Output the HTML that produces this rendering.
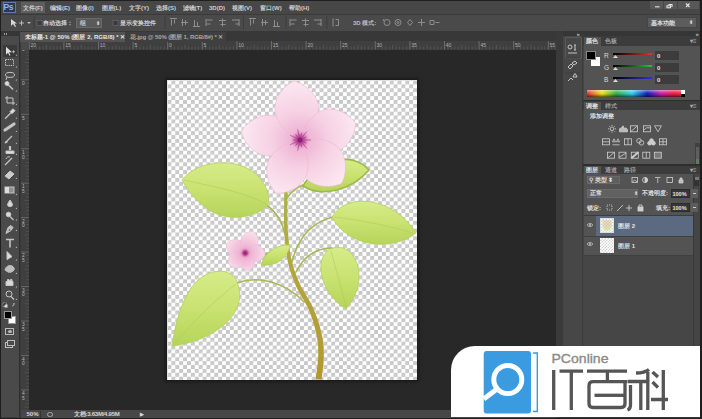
<!DOCTYPE html>
<html><head><meta charset="utf-8">
<style>
*{margin:0;padding:0;box-sizing:border-box}
html,body{width:702px;height:419px;overflow:hidden;background:#3a3a3a;font-family:"Liberation Sans",sans-serif;color:#cfcfcf}
.a{position:absolute}
.t{position:absolute;white-space:nowrap;font-size:6px;line-height:8px;color:#d2d2d2;font-weight:bold}
#menubar{left:1px;top:1px;width:700px;height:12.5px;background:#474747}
#optbar{left:1px;top:14.5px;width:700px;height:16.5px;background:#4a4a4a}
#tabstrip{left:20px;top:31px;width:536px;height:11px;background:#383838}
#canvasbg{left:29px;top:49.5px;width:527px;height:360.5px;background:#282828}
#hruler{left:21px;top:41px;width:535px;height:8.5px;background:#3f3f3f}
#vruler{left:20.5px;top:41px;width:8.5px;height:369px;background:#3f3f3f}
#toolbar{left:1px;top:31px;width:18.5px;height:386px;background:#4a4a4a;border-right:1px solid #2f2f2f}
#status{left:21px;top:410px;width:535px;height:7.5px;background:#474747}
#gapcol{left:556px;top:31px;width:7px;height:386px;background:#3a3a3a}
#iconcol{left:563px;top:31px;width:19px;height:386px;background:#474747}
#panel{left:583px;top:31px;width:117px;height:386px;background:#464646}
#canvas{left:166.5px;top:79.5px;width:250px;height:300px;background-color:#fff;
 background-image:linear-gradient(45deg,#c6c6c6 25%,transparent 25%,transparent 75%,#c6c6c6 75%),linear-gradient(45deg,#c6c6c6 25%,transparent 25%,transparent 75%,#c6c6c6 75%);
 background-size:7.8px 7.8px;background-position:0.5px 0.5px,4.4px 4.4px;box-shadow:0 0 0 1px #1b1b1b,0 0 3px 2px rgba(0,0,0,.35)}
.mb{font-weight:bold;color:#cdcdcd}
.box{position:absolute;background:#383838;border:0.5px solid #2c2c2c}
#wrap{position:absolute;left:0;top:0;width:702px;height:419px;overflow:hidden}
</style></head><body><div id="wrap">
<div class="a" style="left:0;top:0;width:702px;height:1.2px;background:#1f1f1f"></div><div class="a" style="left:0;top:0;width:1px;height:419px;background:#1f1f1f"></div>
<div class="a" id="menubar"></div>
<div class="a" id="optbar"></div>
<div class="a" id="tabstrip"></div>
<div class="a" id="canvasbg"></div>
<div class="a" id="hruler"></div>
<div class="a" id="vruler"></div>
<svg class="a" style="left:0;top:0" width="702" height="60"><line x1="29.30" y1="41.0" x2="29.30" y2="49.5" stroke="#808080" stroke-width="0.7"/><line x1="32.76" y1="46.5" x2="32.76" y2="49.5" stroke="#5e5e5e" stroke-width="0.7"/><line x1="36.22" y1="46.5" x2="36.22" y2="49.5" stroke="#5e5e5e" stroke-width="0.7"/><line x1="39.68" y1="46.5" x2="39.68" y2="49.5" stroke="#5e5e5e" stroke-width="0.7"/><line x1="43.14" y1="46.5" x2="43.14" y2="49.5" stroke="#5e5e5e" stroke-width="0.7"/><line x1="46.60" y1="45.0" x2="46.60" y2="49.5" stroke="#5e5e5e" stroke-width="0.7"/><line x1="50.06" y1="46.5" x2="50.06" y2="49.5" stroke="#5e5e5e" stroke-width="0.7"/><line x1="53.52" y1="46.5" x2="53.52" y2="49.5" stroke="#5e5e5e" stroke-width="0.7"/><line x1="56.98" y1="46.5" x2="56.98" y2="49.5" stroke="#5e5e5e" stroke-width="0.7"/><line x1="60.44" y1="46.5" x2="60.44" y2="49.5" stroke="#5e5e5e" stroke-width="0.7"/><line x1="63.90" y1="41.0" x2="63.90" y2="49.5" stroke="#808080" stroke-width="0.7"/><line x1="67.36" y1="46.5" x2="67.36" y2="49.5" stroke="#5e5e5e" stroke-width="0.7"/><line x1="70.82" y1="46.5" x2="70.82" y2="49.5" stroke="#5e5e5e" stroke-width="0.7"/><line x1="74.28" y1="46.5" x2="74.28" y2="49.5" stroke="#5e5e5e" stroke-width="0.7"/><line x1="77.74" y1="46.5" x2="77.74" y2="49.5" stroke="#5e5e5e" stroke-width="0.7"/><line x1="81.20" y1="45.0" x2="81.20" y2="49.5" stroke="#5e5e5e" stroke-width="0.7"/><line x1="84.66" y1="46.5" x2="84.66" y2="49.5" stroke="#5e5e5e" stroke-width="0.7"/><line x1="88.12" y1="46.5" x2="88.12" y2="49.5" stroke="#5e5e5e" stroke-width="0.7"/><line x1="91.58" y1="46.5" x2="91.58" y2="49.5" stroke="#5e5e5e" stroke-width="0.7"/><line x1="95.04" y1="46.5" x2="95.04" y2="49.5" stroke="#5e5e5e" stroke-width="0.7"/><line x1="98.50" y1="41.0" x2="98.50" y2="49.5" stroke="#808080" stroke-width="0.7"/><line x1="101.96" y1="46.5" x2="101.96" y2="49.5" stroke="#5e5e5e" stroke-width="0.7"/><line x1="105.42" y1="46.5" x2="105.42" y2="49.5" stroke="#5e5e5e" stroke-width="0.7"/><line x1="108.88" y1="46.5" x2="108.88" y2="49.5" stroke="#5e5e5e" stroke-width="0.7"/><line x1="112.34" y1="46.5" x2="112.34" y2="49.5" stroke="#5e5e5e" stroke-width="0.7"/><line x1="115.80" y1="45.0" x2="115.80" y2="49.5" stroke="#5e5e5e" stroke-width="0.7"/><line x1="119.26" y1="46.5" x2="119.26" y2="49.5" stroke="#5e5e5e" stroke-width="0.7"/><line x1="122.72" y1="46.5" x2="122.72" y2="49.5" stroke="#5e5e5e" stroke-width="0.7"/><line x1="126.18" y1="46.5" x2="126.18" y2="49.5" stroke="#5e5e5e" stroke-width="0.7"/><line x1="129.64" y1="46.5" x2="129.64" y2="49.5" stroke="#5e5e5e" stroke-width="0.7"/><line x1="133.10" y1="41.0" x2="133.10" y2="49.5" stroke="#808080" stroke-width="0.7"/><line x1="136.56" y1="46.5" x2="136.56" y2="49.5" stroke="#5e5e5e" stroke-width="0.7"/><line x1="140.02" y1="46.5" x2="140.02" y2="49.5" stroke="#5e5e5e" stroke-width="0.7"/><line x1="143.48" y1="46.5" x2="143.48" y2="49.5" stroke="#5e5e5e" stroke-width="0.7"/><line x1="146.94" y1="46.5" x2="146.94" y2="49.5" stroke="#5e5e5e" stroke-width="0.7"/><line x1="150.40" y1="45.0" x2="150.40" y2="49.5" stroke="#5e5e5e" stroke-width="0.7"/><line x1="153.86" y1="46.5" x2="153.86" y2="49.5" stroke="#5e5e5e" stroke-width="0.7"/><line x1="157.32" y1="46.5" x2="157.32" y2="49.5" stroke="#5e5e5e" stroke-width="0.7"/><line x1="160.78" y1="46.5" x2="160.78" y2="49.5" stroke="#5e5e5e" stroke-width="0.7"/><line x1="164.24" y1="46.5" x2="164.24" y2="49.5" stroke="#5e5e5e" stroke-width="0.7"/><line x1="167.70" y1="41.0" x2="167.70" y2="49.5" stroke="#808080" stroke-width="0.7"/><line x1="171.16" y1="46.5" x2="171.16" y2="49.5" stroke="#5e5e5e" stroke-width="0.7"/><line x1="174.62" y1="46.5" x2="174.62" y2="49.5" stroke="#5e5e5e" stroke-width="0.7"/><line x1="178.08" y1="46.5" x2="178.08" y2="49.5" stroke="#5e5e5e" stroke-width="0.7"/><line x1="181.54" y1="46.5" x2="181.54" y2="49.5" stroke="#5e5e5e" stroke-width="0.7"/><line x1="185.00" y1="45.0" x2="185.00" y2="49.5" stroke="#5e5e5e" stroke-width="0.7"/><line x1="188.46" y1="46.5" x2="188.46" y2="49.5" stroke="#5e5e5e" stroke-width="0.7"/><line x1="191.92" y1="46.5" x2="191.92" y2="49.5" stroke="#5e5e5e" stroke-width="0.7"/><line x1="195.38" y1="46.5" x2="195.38" y2="49.5" stroke="#5e5e5e" stroke-width="0.7"/><line x1="198.84" y1="46.5" x2="198.84" y2="49.5" stroke="#5e5e5e" stroke-width="0.7"/><line x1="202.30" y1="41.0" x2="202.30" y2="49.5" stroke="#808080" stroke-width="0.7"/><line x1="205.76" y1="46.5" x2="205.76" y2="49.5" stroke="#5e5e5e" stroke-width="0.7"/><line x1="209.22" y1="46.5" x2="209.22" y2="49.5" stroke="#5e5e5e" stroke-width="0.7"/><line x1="212.68" y1="46.5" x2="212.68" y2="49.5" stroke="#5e5e5e" stroke-width="0.7"/><line x1="216.14" y1="46.5" x2="216.14" y2="49.5" stroke="#5e5e5e" stroke-width="0.7"/><line x1="219.60" y1="45.0" x2="219.60" y2="49.5" stroke="#5e5e5e" stroke-width="0.7"/><line x1="223.06" y1="46.5" x2="223.06" y2="49.5" stroke="#5e5e5e" stroke-width="0.7"/><line x1="226.52" y1="46.5" x2="226.52" y2="49.5" stroke="#5e5e5e" stroke-width="0.7"/><line x1="229.98" y1="46.5" x2="229.98" y2="49.5" stroke="#5e5e5e" stroke-width="0.7"/><line x1="233.44" y1="46.5" x2="233.44" y2="49.5" stroke="#5e5e5e" stroke-width="0.7"/><line x1="236.90" y1="41.0" x2="236.90" y2="49.5" stroke="#808080" stroke-width="0.7"/><line x1="240.36" y1="46.5" x2="240.36" y2="49.5" stroke="#5e5e5e" stroke-width="0.7"/><line x1="243.82" y1="46.5" x2="243.82" y2="49.5" stroke="#5e5e5e" stroke-width="0.7"/><line x1="247.28" y1="46.5" x2="247.28" y2="49.5" stroke="#5e5e5e" stroke-width="0.7"/><line x1="250.74" y1="46.5" x2="250.74" y2="49.5" stroke="#5e5e5e" stroke-width="0.7"/><line x1="254.20" y1="45.0" x2="254.20" y2="49.5" stroke="#5e5e5e" stroke-width="0.7"/><line x1="257.66" y1="46.5" x2="257.66" y2="49.5" stroke="#5e5e5e" stroke-width="0.7"/><line x1="261.12" y1="46.5" x2="261.12" y2="49.5" stroke="#5e5e5e" stroke-width="0.7"/><line x1="264.58" y1="46.5" x2="264.58" y2="49.5" stroke="#5e5e5e" stroke-width="0.7"/><line x1="268.04" y1="46.5" x2="268.04" y2="49.5" stroke="#5e5e5e" stroke-width="0.7"/><line x1="271.50" y1="41.0" x2="271.50" y2="49.5" stroke="#808080" stroke-width="0.7"/><line x1="274.96" y1="46.5" x2="274.96" y2="49.5" stroke="#5e5e5e" stroke-width="0.7"/><line x1="278.42" y1="46.5" x2="278.42" y2="49.5" stroke="#5e5e5e" stroke-width="0.7"/><line x1="281.88" y1="46.5" x2="281.88" y2="49.5" stroke="#5e5e5e" stroke-width="0.7"/><line x1="285.34" y1="46.5" x2="285.34" y2="49.5" stroke="#5e5e5e" stroke-width="0.7"/><line x1="288.80" y1="45.0" x2="288.80" y2="49.5" stroke="#5e5e5e" stroke-width="0.7"/><line x1="292.26" y1="46.5" x2="292.26" y2="49.5" stroke="#5e5e5e" stroke-width="0.7"/><line x1="295.72" y1="46.5" x2="295.72" y2="49.5" stroke="#5e5e5e" stroke-width="0.7"/><line x1="299.18" y1="46.5" x2="299.18" y2="49.5" stroke="#5e5e5e" stroke-width="0.7"/><line x1="302.64" y1="46.5" x2="302.64" y2="49.5" stroke="#5e5e5e" stroke-width="0.7"/><line x1="306.10" y1="41.0" x2="306.10" y2="49.5" stroke="#808080" stroke-width="0.7"/><line x1="309.56" y1="46.5" x2="309.56" y2="49.5" stroke="#5e5e5e" stroke-width="0.7"/><line x1="313.02" y1="46.5" x2="313.02" y2="49.5" stroke="#5e5e5e" stroke-width="0.7"/><line x1="316.48" y1="46.5" x2="316.48" y2="49.5" stroke="#5e5e5e" stroke-width="0.7"/><line x1="319.94" y1="46.5" x2="319.94" y2="49.5" stroke="#5e5e5e" stroke-width="0.7"/><line x1="323.40" y1="45.0" x2="323.40" y2="49.5" stroke="#5e5e5e" stroke-width="0.7"/><line x1="326.86" y1="46.5" x2="326.86" y2="49.5" stroke="#5e5e5e" stroke-width="0.7"/><line x1="330.32" y1="46.5" x2="330.32" y2="49.5" stroke="#5e5e5e" stroke-width="0.7"/><line x1="333.78" y1="46.5" x2="333.78" y2="49.5" stroke="#5e5e5e" stroke-width="0.7"/><line x1="337.24" y1="46.5" x2="337.24" y2="49.5" stroke="#5e5e5e" stroke-width="0.7"/><line x1="340.70" y1="41.0" x2="340.70" y2="49.5" stroke="#808080" stroke-width="0.7"/><line x1="344.16" y1="46.5" x2="344.16" y2="49.5" stroke="#5e5e5e" stroke-width="0.7"/><line x1="347.62" y1="46.5" x2="347.62" y2="49.5" stroke="#5e5e5e" stroke-width="0.7"/><line x1="351.08" y1="46.5" x2="351.08" y2="49.5" stroke="#5e5e5e" stroke-width="0.7"/><line x1="354.54" y1="46.5" x2="354.54" y2="49.5" stroke="#5e5e5e" stroke-width="0.7"/><line x1="358.00" y1="45.0" x2="358.00" y2="49.5" stroke="#5e5e5e" stroke-width="0.7"/><line x1="361.46" y1="46.5" x2="361.46" y2="49.5" stroke="#5e5e5e" stroke-width="0.7"/><line x1="364.92" y1="46.5" x2="364.92" y2="49.5" stroke="#5e5e5e" stroke-width="0.7"/><line x1="368.38" y1="46.5" x2="368.38" y2="49.5" stroke="#5e5e5e" stroke-width="0.7"/><line x1="371.84" y1="46.5" x2="371.84" y2="49.5" stroke="#5e5e5e" stroke-width="0.7"/><line x1="375.30" y1="41.0" x2="375.30" y2="49.5" stroke="#808080" stroke-width="0.7"/><line x1="378.76" y1="46.5" x2="378.76" y2="49.5" stroke="#5e5e5e" stroke-width="0.7"/><line x1="382.22" y1="46.5" x2="382.22" y2="49.5" stroke="#5e5e5e" stroke-width="0.7"/><line x1="385.68" y1="46.5" x2="385.68" y2="49.5" stroke="#5e5e5e" stroke-width="0.7"/><line x1="389.14" y1="46.5" x2="389.14" y2="49.5" stroke="#5e5e5e" stroke-width="0.7"/><line x1="392.60" y1="45.0" x2="392.60" y2="49.5" stroke="#5e5e5e" stroke-width="0.7"/><line x1="396.06" y1="46.5" x2="396.06" y2="49.5" stroke="#5e5e5e" stroke-width="0.7"/><line x1="399.52" y1="46.5" x2="399.52" y2="49.5" stroke="#5e5e5e" stroke-width="0.7"/><line x1="402.98" y1="46.5" x2="402.98" y2="49.5" stroke="#5e5e5e" stroke-width="0.7"/><line x1="406.44" y1="46.5" x2="406.44" y2="49.5" stroke="#5e5e5e" stroke-width="0.7"/><line x1="409.90" y1="41.0" x2="409.90" y2="49.5" stroke="#808080" stroke-width="0.7"/><line x1="413.36" y1="46.5" x2="413.36" y2="49.5" stroke="#5e5e5e" stroke-width="0.7"/><line x1="416.82" y1="46.5" x2="416.82" y2="49.5" stroke="#5e5e5e" stroke-width="0.7"/><line x1="420.28" y1="46.5" x2="420.28" y2="49.5" stroke="#5e5e5e" stroke-width="0.7"/><line x1="423.74" y1="46.5" x2="423.74" y2="49.5" stroke="#5e5e5e" stroke-width="0.7"/><line x1="427.20" y1="45.0" x2="427.20" y2="49.5" stroke="#5e5e5e" stroke-width="0.7"/><line x1="430.66" y1="46.5" x2="430.66" y2="49.5" stroke="#5e5e5e" stroke-width="0.7"/><line x1="434.12" y1="46.5" x2="434.12" y2="49.5" stroke="#5e5e5e" stroke-width="0.7"/><line x1="437.58" y1="46.5" x2="437.58" y2="49.5" stroke="#5e5e5e" stroke-width="0.7"/><line x1="441.04" y1="46.5" x2="441.04" y2="49.5" stroke="#5e5e5e" stroke-width="0.7"/><line x1="444.50" y1="41.0" x2="444.50" y2="49.5" stroke="#808080" stroke-width="0.7"/><line x1="447.96" y1="46.5" x2="447.96" y2="49.5" stroke="#5e5e5e" stroke-width="0.7"/><line x1="451.42" y1="46.5" x2="451.42" y2="49.5" stroke="#5e5e5e" stroke-width="0.7"/><line x1="454.88" y1="46.5" x2="454.88" y2="49.5" stroke="#5e5e5e" stroke-width="0.7"/><line x1="458.34" y1="46.5" x2="458.34" y2="49.5" stroke="#5e5e5e" stroke-width="0.7"/><line x1="461.80" y1="45.0" x2="461.80" y2="49.5" stroke="#5e5e5e" stroke-width="0.7"/><line x1="465.26" y1="46.5" x2="465.26" y2="49.5" stroke="#5e5e5e" stroke-width="0.7"/><line x1="468.72" y1="46.5" x2="468.72" y2="49.5" stroke="#5e5e5e" stroke-width="0.7"/><line x1="472.18" y1="46.5" x2="472.18" y2="49.5" stroke="#5e5e5e" stroke-width="0.7"/><line x1="475.64" y1="46.5" x2="475.64" y2="49.5" stroke="#5e5e5e" stroke-width="0.7"/><line x1="479.10" y1="41.0" x2="479.10" y2="49.5" stroke="#808080" stroke-width="0.7"/><line x1="482.56" y1="46.5" x2="482.56" y2="49.5" stroke="#5e5e5e" stroke-width="0.7"/><line x1="486.02" y1="46.5" x2="486.02" y2="49.5" stroke="#5e5e5e" stroke-width="0.7"/><line x1="489.48" y1="46.5" x2="489.48" y2="49.5" stroke="#5e5e5e" stroke-width="0.7"/><line x1="492.94" y1="46.5" x2="492.94" y2="49.5" stroke="#5e5e5e" stroke-width="0.7"/><line x1="496.40" y1="45.0" x2="496.40" y2="49.5" stroke="#5e5e5e" stroke-width="0.7"/><line x1="499.86" y1="46.5" x2="499.86" y2="49.5" stroke="#5e5e5e" stroke-width="0.7"/><line x1="503.32" y1="46.5" x2="503.32" y2="49.5" stroke="#5e5e5e" stroke-width="0.7"/><line x1="506.78" y1="46.5" x2="506.78" y2="49.5" stroke="#5e5e5e" stroke-width="0.7"/><line x1="510.24" y1="46.5" x2="510.24" y2="49.5" stroke="#5e5e5e" stroke-width="0.7"/><line x1="513.70" y1="41.0" x2="513.70" y2="49.5" stroke="#808080" stroke-width="0.7"/><line x1="517.16" y1="46.5" x2="517.16" y2="49.5" stroke="#5e5e5e" stroke-width="0.7"/><line x1="520.62" y1="46.5" x2="520.62" y2="49.5" stroke="#5e5e5e" stroke-width="0.7"/><line x1="524.08" y1="46.5" x2="524.08" y2="49.5" stroke="#5e5e5e" stroke-width="0.7"/><line x1="527.54" y1="46.5" x2="527.54" y2="49.5" stroke="#5e5e5e" stroke-width="0.7"/><line x1="531.00" y1="45.0" x2="531.00" y2="49.5" stroke="#5e5e5e" stroke-width="0.7"/><line x1="534.46" y1="46.5" x2="534.46" y2="49.5" stroke="#5e5e5e" stroke-width="0.7"/><line x1="537.92" y1="46.5" x2="537.92" y2="49.5" stroke="#5e5e5e" stroke-width="0.7"/><line x1="541.38" y1="46.5" x2="541.38" y2="49.5" stroke="#5e5e5e" stroke-width="0.7"/><line x1="544.84" y1="46.5" x2="544.84" y2="49.5" stroke="#5e5e5e" stroke-width="0.7"/><line x1="548.30" y1="41.0" x2="548.30" y2="49.5" stroke="#808080" stroke-width="0.7"/><line x1="551.76" y1="46.5" x2="551.76" y2="49.5" stroke="#5e5e5e" stroke-width="0.7"/><line x1="555.22" y1="46.5" x2="555.22" y2="49.5" stroke="#5e5e5e" stroke-width="0.7"/><text x="30.6" y="46.5" font-size="5" fill="#b0b0b0">20</text><text x="65.2" y="46.5" font-size="5" fill="#b0b0b0">15</text><text x="99.8" y="46.5" font-size="5" fill="#b0b0b0">10</text><text x="134.4" y="46.5" font-size="5" fill="#b0b0b0">5</text><text x="169.0" y="46.5" font-size="5" fill="#b0b0b0">0</text><text x="203.6" y="46.5" font-size="5" fill="#b0b0b0">5</text><text x="238.2" y="46.5" font-size="5" fill="#b0b0b0">10</text><text x="272.8" y="46.5" font-size="5" fill="#b0b0b0">15</text><text x="307.4" y="46.5" font-size="5" fill="#b0b0b0">20</text><text x="342.0" y="46.5" font-size="5" fill="#b0b0b0">25</text><text x="376.6" y="46.5" font-size="5" fill="#b0b0b0">30</text><text x="411.2" y="46.5" font-size="5" fill="#b0b0b0">35</text><text x="445.8" y="46.5" font-size="5" fill="#b0b0b0">40</text><text x="480.4" y="46.5" font-size="5" fill="#b0b0b0">45</text><text x="515.0" y="46.5" font-size="5" fill="#b0b0b0">50</text><text x="549.6" y="46.5" font-size="5" fill="#b0b0b0">55</text></svg>
<svg class="a" style="left:0;top:0" width="40" height="419"><text x="22" y="50.5" font-size="4.8" fill="#b8b8b8">5</text><text x="22" y="85.0" font-size="4.8" fill="#b8b8b8">0</text><text x="22" y="119.5" font-size="4.8" fill="#b8b8b8">5</text><text x="22" y="153.9" font-size="4.8" fill="#b8b8b8">1</text><text x="22" y="158.5" font-size="4.8" fill="#b8b8b8">0</text><text x="22" y="188.4" font-size="4.8" fill="#b8b8b8">1</text><text x="22" y="193.0" font-size="4.8" fill="#b8b8b8">5</text><text x="22" y="222.8" font-size="4.8" fill="#b8b8b8">2</text><text x="22" y="227.4" font-size="4.8" fill="#b8b8b8">0</text><text x="22" y="257.3" font-size="4.8" fill="#b8b8b8">2</text><text x="22" y="261.9" font-size="4.8" fill="#b8b8b8">5</text><text x="22" y="291.8" font-size="4.8" fill="#b8b8b8">3</text><text x="22" y="296.4" font-size="4.8" fill="#b8b8b8">0</text><text x="22" y="326.2" font-size="4.8" fill="#b8b8b8">3</text><text x="22" y="330.8" font-size="4.8" fill="#b8b8b8">5</text><text x="22" y="360.7" font-size="4.8" fill="#b8b8b8">4</text><text x="22" y="365.3" font-size="4.8" fill="#b8b8b8">0</text><text x="22" y="395.1" font-size="4.8" fill="#b8b8b8">4</text><text x="22" y="399.7" font-size="4.8" fill="#b8b8b8">5</text><line x1="26" y1="52.23" x2="29" y2="52.23" stroke="#565656" stroke-width="0.7"/><line x1="26" y1="55.68" x2="29" y2="55.68" stroke="#565656" stroke-width="0.7"/><line x1="26" y1="59.12" x2="29" y2="59.12" stroke="#565656" stroke-width="0.7"/><line x1="24.5" y1="62.57" x2="29" y2="62.57" stroke="#565656" stroke-width="0.7"/><line x1="26" y1="66.02" x2="29" y2="66.02" stroke="#565656" stroke-width="0.7"/><line x1="26" y1="69.46" x2="29" y2="69.46" stroke="#565656" stroke-width="0.7"/><line x1="26" y1="72.91" x2="29" y2="72.91" stroke="#565656" stroke-width="0.7"/><line x1="26" y1="76.35" x2="29" y2="76.35" stroke="#565656" stroke-width="0.7"/><line x1="21" y1="79.80" x2="29" y2="79.80" stroke="#777" stroke-width="0.7"/><line x1="26" y1="83.25" x2="29" y2="83.25" stroke="#565656" stroke-width="0.7"/><line x1="26" y1="86.69" x2="29" y2="86.69" stroke="#565656" stroke-width="0.7"/><line x1="26" y1="90.14" x2="29" y2="90.14" stroke="#565656" stroke-width="0.7"/><line x1="26" y1="93.58" x2="29" y2="93.58" stroke="#565656" stroke-width="0.7"/><line x1="24.5" y1="97.03" x2="29" y2="97.03" stroke="#565656" stroke-width="0.7"/><line x1="26" y1="100.48" x2="29" y2="100.48" stroke="#565656" stroke-width="0.7"/><line x1="26" y1="103.92" x2="29" y2="103.92" stroke="#565656" stroke-width="0.7"/><line x1="26" y1="107.37" x2="29" y2="107.37" stroke="#565656" stroke-width="0.7"/><line x1="26" y1="110.81" x2="29" y2="110.81" stroke="#565656" stroke-width="0.7"/><line x1="21" y1="114.26" x2="29" y2="114.26" stroke="#777" stroke-width="0.7"/><line x1="26" y1="117.71" x2="29" y2="117.71" stroke="#565656" stroke-width="0.7"/><line x1="26" y1="121.15" x2="29" y2="121.15" stroke="#565656" stroke-width="0.7"/><line x1="26" y1="124.60" x2="29" y2="124.60" stroke="#565656" stroke-width="0.7"/><line x1="26" y1="128.04" x2="29" y2="128.04" stroke="#565656" stroke-width="0.7"/><line x1="24.5" y1="131.49" x2="29" y2="131.49" stroke="#565656" stroke-width="0.7"/><line x1="26" y1="134.94" x2="29" y2="134.94" stroke="#565656" stroke-width="0.7"/><line x1="26" y1="138.38" x2="29" y2="138.38" stroke="#565656" stroke-width="0.7"/><line x1="26" y1="141.83" x2="29" y2="141.83" stroke="#565656" stroke-width="0.7"/><line x1="26" y1="145.27" x2="29" y2="145.27" stroke="#565656" stroke-width="0.7"/><line x1="21" y1="148.72" x2="29" y2="148.72" stroke="#777" stroke-width="0.7"/><line x1="26" y1="152.17" x2="29" y2="152.17" stroke="#565656" stroke-width="0.7"/><line x1="26" y1="155.61" x2="29" y2="155.61" stroke="#565656" stroke-width="0.7"/><line x1="26" y1="159.06" x2="29" y2="159.06" stroke="#565656" stroke-width="0.7"/><line x1="26" y1="162.50" x2="29" y2="162.50" stroke="#565656" stroke-width="0.7"/><line x1="24.5" y1="165.95" x2="29" y2="165.95" stroke="#565656" stroke-width="0.7"/><line x1="26" y1="169.40" x2="29" y2="169.40" stroke="#565656" stroke-width="0.7"/><line x1="26" y1="172.84" x2="29" y2="172.84" stroke="#565656" stroke-width="0.7"/><line x1="26" y1="176.29" x2="29" y2="176.29" stroke="#565656" stroke-width="0.7"/><line x1="26" y1="179.73" x2="29" y2="179.73" stroke="#565656" stroke-width="0.7"/><line x1="21" y1="183.18" x2="29" y2="183.18" stroke="#777" stroke-width="0.7"/><line x1="26" y1="186.63" x2="29" y2="186.63" stroke="#565656" stroke-width="0.7"/><line x1="26" y1="190.07" x2="29" y2="190.07" stroke="#565656" stroke-width="0.7"/><line x1="26" y1="193.52" x2="29" y2="193.52" stroke="#565656" stroke-width="0.7"/><line x1="26" y1="196.96" x2="29" y2="196.96" stroke="#565656" stroke-width="0.7"/><line x1="24.5" y1="200.41" x2="29" y2="200.41" stroke="#565656" stroke-width="0.7"/><line x1="26" y1="203.86" x2="29" y2="203.86" stroke="#565656" stroke-width="0.7"/><line x1="26" y1="207.30" x2="29" y2="207.30" stroke="#565656" stroke-width="0.7"/><line x1="26" y1="210.75" x2="29" y2="210.75" stroke="#565656" stroke-width="0.7"/><line x1="26" y1="214.19" x2="29" y2="214.19" stroke="#565656" stroke-width="0.7"/><line x1="21" y1="217.64" x2="29" y2="217.64" stroke="#777" stroke-width="0.7"/><line x1="26" y1="221.09" x2="29" y2="221.09" stroke="#565656" stroke-width="0.7"/><line x1="26" y1="224.53" x2="29" y2="224.53" stroke="#565656" stroke-width="0.7"/><line x1="26" y1="227.98" x2="29" y2="227.98" stroke="#565656" stroke-width="0.7"/><line x1="26" y1="231.42" x2="29" y2="231.42" stroke="#565656" stroke-width="0.7"/><line x1="24.5" y1="234.87" x2="29" y2="234.87" stroke="#565656" stroke-width="0.7"/><line x1="26" y1="238.32" x2="29" y2="238.32" stroke="#565656" stroke-width="0.7"/><line x1="26" y1="241.76" x2="29" y2="241.76" stroke="#565656" stroke-width="0.7"/><line x1="26" y1="245.21" x2="29" y2="245.21" stroke="#565656" stroke-width="0.7"/><line x1="26" y1="248.65" x2="29" y2="248.65" stroke="#565656" stroke-width="0.7"/><line x1="21" y1="252.10" x2="29" y2="252.10" stroke="#777" stroke-width="0.7"/><line x1="26" y1="255.55" x2="29" y2="255.55" stroke="#565656" stroke-width="0.7"/><line x1="26" y1="258.99" x2="29" y2="258.99" stroke="#565656" stroke-width="0.7"/><line x1="26" y1="262.44" x2="29" y2="262.44" stroke="#565656" stroke-width="0.7"/><line x1="26" y1="265.88" x2="29" y2="265.88" stroke="#565656" stroke-width="0.7"/><line x1="24.5" y1="269.33" x2="29" y2="269.33" stroke="#565656" stroke-width="0.7"/><line x1="26" y1="272.78" x2="29" y2="272.78" stroke="#565656" stroke-width="0.7"/><line x1="26" y1="276.22" x2="29" y2="276.22" stroke="#565656" stroke-width="0.7"/><line x1="26" y1="279.67" x2="29" y2="279.67" stroke="#565656" stroke-width="0.7"/><line x1="26" y1="283.11" x2="29" y2="283.11" stroke="#565656" stroke-width="0.7"/><line x1="21" y1="286.56" x2="29" y2="286.56" stroke="#777" stroke-width="0.7"/><line x1="26" y1="290.01" x2="29" y2="290.01" stroke="#565656" stroke-width="0.7"/><line x1="26" y1="293.45" x2="29" y2="293.45" stroke="#565656" stroke-width="0.7"/><line x1="26" y1="296.90" x2="29" y2="296.90" stroke="#565656" stroke-width="0.7"/><line x1="26" y1="300.34" x2="29" y2="300.34" stroke="#565656" stroke-width="0.7"/><line x1="24.5" y1="303.79" x2="29" y2="303.79" stroke="#565656" stroke-width="0.7"/><line x1="26" y1="307.24" x2="29" y2="307.24" stroke="#565656" stroke-width="0.7"/><line x1="26" y1="310.68" x2="29" y2="310.68" stroke="#565656" stroke-width="0.7"/><line x1="26" y1="314.13" x2="29" y2="314.13" stroke="#565656" stroke-width="0.7"/><line x1="26" y1="317.57" x2="29" y2="317.57" stroke="#565656" stroke-width="0.7"/><line x1="21" y1="321.02" x2="29" y2="321.02" stroke="#777" stroke-width="0.7"/><line x1="26" y1="324.47" x2="29" y2="324.47" stroke="#565656" stroke-width="0.7"/><line x1="26" y1="327.91" x2="29" y2="327.91" stroke="#565656" stroke-width="0.7"/><line x1="26" y1="331.36" x2="29" y2="331.36" stroke="#565656" stroke-width="0.7"/><line x1="26" y1="334.80" x2="29" y2="334.80" stroke="#565656" stroke-width="0.7"/><line x1="24.5" y1="338.25" x2="29" y2="338.25" stroke="#565656" stroke-width="0.7"/><line x1="26" y1="341.70" x2="29" y2="341.70" stroke="#565656" stroke-width="0.7"/><line x1="26" y1="345.14" x2="29" y2="345.14" stroke="#565656" stroke-width="0.7"/><line x1="26" y1="348.59" x2="29" y2="348.59" stroke="#565656" stroke-width="0.7"/><line x1="26" y1="352.03" x2="29" y2="352.03" stroke="#565656" stroke-width="0.7"/><line x1="21" y1="355.48" x2="29" y2="355.48" stroke="#777" stroke-width="0.7"/><line x1="26" y1="358.93" x2="29" y2="358.93" stroke="#565656" stroke-width="0.7"/><line x1="26" y1="362.37" x2="29" y2="362.37" stroke="#565656" stroke-width="0.7"/><line x1="26" y1="365.82" x2="29" y2="365.82" stroke="#565656" stroke-width="0.7"/><line x1="26" y1="369.26" x2="29" y2="369.26" stroke="#565656" stroke-width="0.7"/><line x1="24.5" y1="372.71" x2="29" y2="372.71" stroke="#565656" stroke-width="0.7"/><line x1="26" y1="376.16" x2="29" y2="376.16" stroke="#565656" stroke-width="0.7"/><line x1="26" y1="379.60" x2="29" y2="379.60" stroke="#565656" stroke-width="0.7"/><line x1="26" y1="383.05" x2="29" y2="383.05" stroke="#565656" stroke-width="0.7"/><line x1="26" y1="386.49" x2="29" y2="386.49" stroke="#565656" stroke-width="0.7"/><line x1="21" y1="389.94" x2="29" y2="389.94" stroke="#777" stroke-width="0.7"/><line x1="26" y1="393.39" x2="29" y2="393.39" stroke="#565656" stroke-width="0.7"/><line x1="26" y1="396.83" x2="29" y2="396.83" stroke="#565656" stroke-width="0.7"/><line x1="26" y1="400.28" x2="29" y2="400.28" stroke="#565656" stroke-width="0.7"/><line x1="26" y1="403.72" x2="29" y2="403.72" stroke="#565656" stroke-width="0.7"/><line x1="24.5" y1="407.17" x2="29" y2="407.17" stroke="#565656" stroke-width="0.7"/></svg>
<div class="a" style="left:20.5px;top:41px;width:8.5px;height:8.5px;background:#4a4a4a"></div>
<div class="a" id="toolbar"></div>
<div class="a" id="status"></div>
<div class="a" id="gapcol"></div>
<div class="a" id="iconcol"></div>
<div class="a" id="panel"></div>

<!-- menu -->
<div class="a" style="left:3px;top:2px;width:13px;height:11px;background:#2a3a55;border:0.5px solid #5d7aa8"></div>
<div class="t" style="left:3.5px;top:3px;font-size:8.5px;line-height:9px;color:#8fb6e8;font-weight:bold;letter-spacing:-0.3px">Ps</div>
<div class="a" style="left:21px;top:2px;width:24px;height:11px;background:#5e5e5e"></div>
<div class="t mb" style="left:23px;top:3.5px">文件(F)</div>
<div class="t mb" style="left:50px;top:3.5px">编辑(E)</div>
<div class="t mb" style="left:76px;top:3.5px">图像(I)</div>
<div class="t mb" style="left:101.5px;top:3.5px">图层(L)</div>
<div class="t mb" style="left:129px;top:3.5px">文字(Y)</div>
<div class="t mb" style="left:156px;top:3.5px">选择(S)</div>
<div class="t mb" style="left:182.5px;top:3.5px">滤镜(T)</div>
<div class="t mb" style="left:209px;top:3.5px">3D(D)</div>
<div class="t mb" style="left:232px;top:3.5px">视图(V)</div>
<div class="t mb" style="left:260px;top:3.5px">窗口(W)</div>
<div class="t mb" style="left:289px;top:3.5px">帮助(H)</div>
<!-- window controls -->
<div class="a" style="left:649.7px;top:1.3px;width:13.3px;height:7.5px;background:#585858"></div>
<div class="a" style="left:663.5px;top:1.3px;width:13.5px;height:7.5px;background:#585858"></div>
<div class="a" style="left:677.5px;top:1.3px;width:21.5px;height:7.5px;background:#585858"></div>
<svg class="a" style="left:640px;top:0" width="62" height="12"><g fill="none" stroke="#e6e6e6" stroke-width="1.1">
<path d="M15,6.8 h4.5"/><path d="M28.5,4.5 h3.5 v2.5 M27,5.8 h3.5 v2 h-3.5z"/><path d="M46,3.5 l3.5,3.5 M49.5,3.5 l-3.5,3.5"/>
</g></svg>
<!-- options bar -->
<svg class="a" style="left:0;top:14px" width="480" height="17">
 <path d="M11,5 L11,12 L13,10 L15,13 L16,12.5 L14.5,9.5 L17,9.5 Z" fill="#d8d8d8"/>
 <path d="M19,9 h5 M21.5,6.5 v5" stroke="#cfcfcf" stroke-width="0.8"/>
 <path d="M27,8 l2,2 l2,-2 z" fill="#bbb"/>
 <rect x="37" y="6.5" width="5" height="5" fill="#3a3a3a" stroke="#777" stroke-width="0.5"/>
 <rect x="113" y="6.5" width="5" height="5" fill="#3a3a3a" stroke="#777" stroke-width="0.5"/>
 <g fill="none" stroke="#8e8e8e" stroke-width="1">
  <path d="M170,4.5 h7 M171.5,5.5 v6 M174.5,5.5 v4 M181,8.5 h7 M182.5,5 v7 M185.5,6 v5 M193,12.5 h7 M194.5,6 v6 M197.5,8 v4 M206,5 v7 M206.5,6 h6 M206.5,10 h4 M222.5,4.5 v8 M219,6.5 h7 M220.5,10.5 h5 M239,5 v7 M232,6 h7 M235.5,10 h4 M249,4.5 h7 M250.5,5.5 v6 M253.5,5.5 v4 M261,8.5 h7 M262.5,5 v7 M265.5,6 v5 M273,12.5 h7 M274.5,6 v6 M277.5,8 v4 M290,5 v7 M290.5,6 h6 M290.5,10 h4 M305.5,4.5 v8 M302,6.5 h7 M303.5,10.5 h5 M321,5 v7 M314,6 h7 M317.5,10 h4"/>
  <path d="M333,4.5 v8 M335.5,5.5 h3 v6 h-3"/>
  <circle cx="387" cy="8.5" r="3"/><path d="M384,5 l-1,2"/><circle cx="398" cy="8.5" r="3"/><circle cx="398" cy="8.5" r="1"/><path d="M407.5,8.5 l2.5,-3 l2.5,3 l-2.5,3z"/><path d="M418,8.5 h7 M421.5,5 v7"/>
  <path d="M430,6.5 h4 v4 h-4z M435.5,8.5 h4"/>
 </g>
 <g stroke="#3a3a3a" stroke-width="0.8"><path d="M34,2v13M165,2v13M243.5,2v13M286,2v13M327,2v13"/></g>
</svg>
<div class="t" style="left:43px;top:19px;color:#d5d5d5">自动选择：</div>
<div class="box" style="left:76px;top:18px;width:26px;height:10px;background:#5a5a5a;border-color:#6a6a6a"></div>
<div class="t" style="left:80px;top:19px">组</div>
<div class="t" style="left:96px;top:18.5px;font-size:5px">⬍</div>
<div class="t" style="left:120px;top:19px">显示变换控件</div>
<div class="t" style="left:353px;top:19px;color:#bdbdbd">3D 模式:</div>
<div class="box" style="left:647px;top:16.5px;width:49.5px;height:11.5px;background:#5c5c5c;border-color:#454545"></div>
<div class="t" style="left:651px;top:18.5px;color:#e0e0e0">基本功能</div>
<div class="t" style="left:689px;top:18px;font-size:5px">⬍</div>

<!-- tabs -->
<div class="a" style="left:20px;top:31.5px;width:104.5px;height:10.5px;background:#535353"></div>
<div class="t" style="left:24.5px;top:33px;color:#e6e6e6;letter-spacing:0.05px">未标题-1 @ 50% (图层 2, RGB/8) * ✕</div>
<div class="a" style="left:125px;top:31.5px;width:101px;height:10.5px;background:#3f3f3f"></div>
<div class="t" style="left:130px;top:33px;color:#a8a8a8;letter-spacing:-0.1px">花.jpg @ 50% (图层 1, RGB/8#) * ✕</div>

<!-- canvas -->
<div class="a" id="canvas"></div>
<svg class="a" style="left:0;top:0" width="702" height="419" viewBox="0 0 702 419"><defs>
<linearGradient id="leafg" x1="0" y1="0" x2="0" y2="1"><stop offset="0" stop-color="#d6ec8a"/><stop offset="0.5" stop-color="#c9e270"/><stop offset="1" stop-color="#b6d45a"/></linearGradient>
<linearGradient id="stemg" x1="0" y1="0" x2="0" y2="1"><stop offset="0" stop-color="#a9b44a"/><stop offset="0.45" stop-color="#b3a53c"/><stop offset="1" stop-color="#b3962e"/></linearGradient>
<radialGradient id="petg" gradientUnits="userSpaceOnUse" cx="300" cy="140" r="62"><stop offset="0" stop-color="#e38ac0"/><stop offset="0.15" stop-color="#efb6d5"/><stop offset="0.45" stop-color="#f6d0e3"/><stop offset="0.85" stop-color="#fbe3ef"/><stop offset="1" stop-color="#fdecf4"/></radialGradient>
<radialGradient id="petg2" gradientUnits="userSpaceOnUse" cx="245.2" cy="253" r="22"><stop offset="0" stop-color="#e284bb"/><stop offset="0.3" stop-color="#f0b6d5"/><stop offset="1" stop-color="#fae0ec"/></radialGradient>
<radialGradient id="ctrg"><stop offset="0" stop-color="#8a1a74"/><stop offset="0.45" stop-color="#b0408e" stop-opacity="0.9"/><stop offset="1" stop-color="#e9a0c8" stop-opacity="0"/></radialGradient>
<clipPath id="cv"><rect x="166.5" y="79.5" width="250" height="300"/></clipPath>
</defs><g clip-path="url(#cv)"><path d="M267,205 C276,212 282,220 285,234" fill="none" stroke="#aab84e" stroke-width="1.6" stroke-linecap="round"/><path d="M237,283 C258,275 285,282 304,302" fill="none" stroke="#aab84e" stroke-width="1.6" stroke-linecap="round"/><path d="M292,262 C298,238 312,222 333,217" fill="none" stroke="#aab84e" stroke-width="1.6" stroke-linecap="round"/><path d="M296,272 C303,258 315,248 332,248" fill="none" stroke="#aab84e" stroke-width="1.6" stroke-linecap="round"/><path d="M287,198 C291,192 297,187 305,184" fill="none" stroke="#aab84e" stroke-width="1.6" stroke-linecap="round"/><path d="M287,246 C278,250 270,254 258,256" fill="none" stroke="#aab84e" stroke-width="1.6" stroke-linecap="round"/><path d="M284.4,186.0 L284.3,189.5 L284.3,194.2 L284.1,199.8 L284.1,206.0 L284.0,212.4 L284.0,218.8 L284.0,224.8 L284.2,230.1 L284.5,234.8 L284.8,239.2 L285.2,243.5 L285.6,247.6 L286.1,251.5 L286.7,255.2 L287.3,258.9 L288.0,262.4 L288.8,265.8 L289.6,268.9 L290.5,271.9 L291.5,274.7 L292.5,277.5 L293.6,280.2 L294.7,283.0 L296.0,285.9 L297.4,289.0 L299.1,292.0 L300.8,295.0 L302.5,298.0 L304.3,301.0 L305.9,304.0 L307.5,307.0 L308.8,310.0 L310.0,313.0 L311.2,316.1 L312.3,319.2 L313.3,322.4 L314.2,325.5 L315.1,328.6 L315.8,331.6 L316.5,334.5 L317.0,337.3 L317.4,340.0 L317.8,342.5 L318.0,345.1 L318.2,347.6 L318.2,350.2 L318.3,353.0 L318.2,355.9 L318.0,359.2 L317.7,363.0 L317.3,367.0 L316.7,371.0 L316.2,374.9 L315.7,378.4 L315.3,381.4 L315.0,383.6 L321.0,384.4 L321.2,382.2 L321.6,379.2 L322.0,375.7 L322.5,371.7 L323.0,367.6 L323.4,363.5 L323.7,359.6 L323.8,356.1 L323.8,353.0 L323.7,350.1 L323.6,347.3 L323.4,344.6 L323.1,341.9 L322.7,339.2 L322.2,336.4 L321.5,333.5 L320.8,330.4 L320.0,327.3 L319.1,324.1 L318.1,320.9 L317.0,317.6 L315.8,314.4 L314.5,311.2 L313.2,308.0 L311.7,304.9 L310.0,301.8 L308.3,298.7 L306.5,295.7 L304.7,292.7 L303.0,289.8 L301.4,286.9 L300.0,284.1 L298.7,281.3 L297.5,278.6 L296.4,275.9 L295.4,273.3 L294.5,270.6 L293.6,267.8 L292.7,264.8 L292.0,261.6 L291.2,258.1 L290.5,254.6 L289.9,250.9 L289.4,247.1 L288.9,243.1 L288.5,238.9 L288.1,234.5 L287.8,229.9 L287.6,224.7 L287.5,218.8 L287.4,212.4 L287.4,206.0 L287.5,199.8 L287.6,194.2 L287.6,189.5 L287.6,186.0 Z" fill="url(#stemg)"/><path d="M182,180 C197,160 240,155 260,178 C268,188 270,198 268,205 C255,220 222,222 205,207 C195,199 188,191 182,180 Z" fill="url(#leafg)" stroke="#b4cf5c" stroke-width="0.8"/><path d="M332,217 C345,193 392,195 416,233 C395,250 350,250 332,217 Z" fill="url(#leafg)" stroke="#b4cf5c" stroke-width="0.8"/><path d="M330,249 C355,238 372,280 346,309 C322,295 312,260 330,249 Z" fill="url(#leafg)" stroke="#b4cf5c" stroke-width="0.8"/><path d="M237,282 C232,268 212,268 198,280 C182,295 175,325 172,346 C205,342 232,325 238,305 C241,296 240,290 237,282 Z" fill="url(#leafg)" stroke="#b4cf5c" stroke-width="0.8"/><path d="M303,186 C318,160 352,150 369,170 C352,190 322,198 303,186 Z" fill="url(#leafg)" stroke="#9fb84a" stroke-width="1.6"/><path d="M261,265 C265,251 279,244 290,245 C288,258 276,267 261,265 Z" fill="url(#leafg)" stroke="#b4cf5c" stroke-width="0.8"/><path d="M184,180 C210,186 245,192 266,204" fill="none" stroke="#b0ca5c" stroke-width="0.7" opacity="0.8"/><path d="M334,217 C360,220 390,226 413,233" fill="none" stroke="#b0ca5c" stroke-width="0.7" opacity="0.8"/><path d="M331,251 C336,270 342,290 346,307" fill="none" stroke="#b0ca5c" stroke-width="0.7" opacity="0.8"/><path d="M236,284 C215,300 190,325 175,343" fill="none" stroke="#b0ca5c" stroke-width="0.7" opacity="0.8"/><path d="M300.00,140.00 C291.36,150.60 273.37,159.89 259.89,154.06 C248.64,149.32 241.98,137.36 241.57,131.79 C243.50,126.55 253.20,116.88 265.32,115.43 C279.89,113.54 294.62,127.43 300.00,140.00 Z" fill="url(#petg)" stroke="#efb6d3" stroke-width="0.6"/><path d="M300.00,140.00 C286.73,134.28 272.47,119.16 275.17,104.64 C277.28,92.56 288.11,83.11 293.83,81.32 C299.80,81.88 312.36,88.87 316.94,100.25 C322.60,113.90 311.79,131.64 300.00,140.00 Z" fill="url(#petg)" stroke="#efb6d3" stroke-width="0.6"/><path d="M300.00,140.00 C302.97,125.92 314.82,109.12 329.36,109.06 C341.43,108.89 352.64,117.76 355.47,123.04 C356.08,129.00 351.75,142.62 341.64,149.23 C329.55,157.32 310.34,150.01 300.00,140.00 Z" fill="url(#petg)" stroke="#efb6d3" stroke-width="0.6"/><path d="M300.00,140.00 C314.28,136.22 335.23,139.34 342.14,152.69 C348.00,163.71 345.18,178.12 341.68,183.16 C336.52,186.48 322.02,188.80 311.21,182.56 C298.11,175.19 295.72,154.14 300.00,140.00 Z" fill="url(#petg)" stroke="#efb6d3" stroke-width="0.6"/><path d="M300.00,140.00 C307.86,151.12 311.94,170.71 302.72,181.84 C295.15,191.17 281.87,194.15 276.41,192.99 C271.89,189.71 265.22,177.85 267.09,165.98 C269.19,151.68 286.48,141.60 300.00,140.00 Z" fill="url(#petg)" stroke="#efb6d3" stroke-width="0.6"/><circle cx="300" cy="140" r="10" fill="url(#ctrg)" opacity="0.7"/><path d="M300,140 L311.0,140.0 M300,140 L306.3,143.0 M300,140 L306.9,148.6 M300,140 L301.6,146.8 M300,140 L297.6,150.7 M300,140 L295.6,145.5 M300,140 L290.1,144.8 M300,140 L293.0,140.0 M300,140 L290.1,135.2 M300,140 L295.6,134.5 M300,140 L297.6,129.3 M300,140 L301.6,133.2 M300,140 L306.9,131.4 M300,140 L306.3,137.0" stroke="#a8308a" stroke-width="0.8" opacity="0.8"/><circle cx="300" cy="140" r="2.5" fill="#8e1c78"/><path d="M245.20,253.00 C240.72,256.06 233.28,257.53 229.58,253.75 C226.47,250.65 225.98,245.32 226.66,243.14 C228.08,241.36 232.78,238.79 237.09,239.63 C242.29,240.58 245.23,247.58 245.20,253.00 Z" fill="url(#petg2)" stroke="#efb6d3" stroke-width="0.4"/><path d="M245.20,253.00 C241.35,248.66 238.76,240.87 242.25,236.26 C245.10,232.40 250.67,231.01 253.07,231.39 C255.15,232.63 258.52,237.29 258.22,242.07 C257.93,247.84 250.94,252.15 245.20,253.00 Z" fill="url(#petg2)" stroke="#efb6d3" stroke-width="0.4"/><path d="M245.20,253.00 C247.77,248.29 253.53,243.69 258.27,245.45 C262.22,246.87 264.87,251.45 265.19,253.70 C264.71,255.92 261.76,260.30 257.71,261.44 C252.86,262.87 247.43,257.88 245.20,253.00 Z" fill="url(#petg2)" stroke="#efb6d3" stroke-width="0.4"/><path d="M245.20,253.00 C250.05,254.18 255.50,258.17 254.93,262.71 C254.51,266.48 250.92,269.82 248.94,270.61 C246.81,270.69 242.18,269.10 240.26,265.83 C237.89,261.91 241.25,256.05 245.20,253.00 Z" fill="url(#petg2)" stroke="#efb6d3" stroke-width="0.4"/><path d="M245.20,253.00 C246.17,258.28 244.59,265.48 239.79,267.09 C235.83,268.48 230.89,266.58 229.23,265.04 C228.20,263.01 227.74,257.74 230.16,254.31 C233.03,250.15 240.39,250.61 245.20,253.00 Z" fill="url(#petg2)" stroke="#efb6d3" stroke-width="0.4"/><circle cx="245.2" cy="253" r="5" fill="url(#ctrg)"/><circle cx="245.2" cy="253" r="1.5" fill="#9a2880"/></g></svg>

<!-- toolbar -->
<div class="a" style="left:1px;top:31px;width:19px;height:5px;background:#363636"></div>
<div class="a" style="left:4px;top:32.5px;width:3px;height:2px;border-left:1px solid #999;border-right:1px solid #999"></div>
<div class="a" style="left:2.5px;top:45px;width:14.5px;height:11.5px;background:#3a3a3a"></div>
<svg class="a" style="left:0;top:0" width="21" height="360">
<g fill="none" stroke="#c4c4c4" stroke-width="1">
<g transform="translate(0,50.7)"><path d="M6,-4 v8 l2,-2 l1.5,3 l1,-0.5 l-1.5,-3 h3z" fill="#e0e0e0" stroke="none"/><path d="M12,1 h3 M13.5,-0.5 v3" stroke-width="0.8"/></g>
<path d="M15.5,55.7 l1.5,-1.5 v1.5z" fill="#bbb" stroke="none"/>
<g transform="translate(0,62.5)"><rect x="5.5" y="-3" width="8" height="6" stroke-dasharray="1.3 0.9"/></g>
<path d="M15.5,67.5 l1.5,-1.5 v1.5z" fill="#bbb" stroke="none"/>
<g transform="translate(0,75.4)"><ellipse cx="10" cy="-0.5" rx="4.5" ry="2.5"/><path d="M7,1.5 l-1,3"/></g>
<path d="M15.5,80.4 l1.5,-1.5 v1.5z" fill="#bbb" stroke="none"/>
<g transform="translate(0,86.5)"><path d="M7,-3 l6,6" stroke-width="1.6"/><circle cx="7" cy="-3" r="2" fill="#ddd"/></g>
<path d="M15.5,91.5 l1.5,-1.5 v1.5z" fill="#bbb" stroke="none"/>
<g transform="translate(0,100)"><path d="M5,-2 h8 v7 M7,-4 v7 h8"/></g>
<path d="M15.5,105 l1.5,-1.5 v1.5z" fill="#bbb" stroke="none"/>
<g transform="translate(0,113.7)"><path d="M5,5 l6,-6" stroke-width="1.3"/><path d="M10,-2 l3,-3 l2,2 l-3,3z" fill="#ddd"/></g>
<path d="M15.5,118.7 l1.5,-1.5 v1.5z" fill="#bbb" stroke="none"/>
<g transform="translate(0,127)"><path d="M5,3 l9,-6" stroke-width="3.2" stroke-linecap="round"/></g>
<path d="M15.5,132 l1.5,-1.5 v1.5z" fill="#bbb" stroke="none"/>
<g transform="translate(0,139)"><path d="M5,4 l7,-7" stroke-width="1.3"/><path d="M5,4 l1.5,-2 l1,1z" fill="#ddd"/></g>
<path d="M15.5,144 l1.5,-1.5 v1.5z" fill="#bbb" stroke="none"/>
<g transform="translate(0,150)"><path d="M10,-4 v4" stroke-width="2.2"/><path d="M6,1 h8 v2.5 h-8z" fill="#ddd"/></g>
<path d="M15.5,155 l1.5,-1.5 v1.5z" fill="#bbb" stroke="none"/>
<g transform="translate(0,161)"><path d="M5,4 l7,-7" stroke-width="1.3"/><path d="M6,-2 a3,3 0 0 1 4,-2"/></g>
<path d="M15.5,166 l1.5,-1.5 v1.5z" fill="#bbb" stroke="none"/>
<g transform="translate(0,174)"><path d="M5,2 l5,-5 l4,3 l-5,5z" fill="#ccc"/></g>
<path d="M15.5,179 l1.5,-1.5 v1.5z" fill="#bbb" stroke="none"/>
<g transform="translate(0,190)"><rect x="5" y="-3" width="9" height="6" fill="#8f8f8f"/><rect x="5" y="-3" width="4" height="6" fill="#dcdcdc" stroke="none"/></g>
<path d="M15.5,195 l1.5,-1.5 v1.5z" fill="#bbb" stroke="none"/>
<g transform="translate(0,204)"><path d="M10,-4 c-3,4 -3.5,6.5 0,6.5 c3.5,0 3,-2.5 0,-6.5z" fill="#d8d8d8"/></g>
<path d="M15.5,209 l1.5,-1.5 v1.5z" fill="#bbb" stroke="none"/>
<g transform="translate(0,215.5)"><circle cx="8.5" cy="-1" r="2.3" fill="#d8d8d8"/><path d="M10,1 l3.5,3.5" stroke-width="1.2"/></g>
<path d="M15.5,220.5 l1.5,-1.5 v1.5z" fill="#bbb" stroke="none"/>
<g transform="translate(0,229.5)"><path d="M6,4 l2,-6 l3,-2 l2,2 l-2,3 z" fill="#bdbdbd"/><circle cx="9.5" cy="0.5" r="0.8" fill="#4a4a4a" stroke="none"/></g>
<path d="M15.5,231 l1.5,-1.5 v1.5z" fill="#bbb" stroke="none"/>
<g transform="translate(0,243)"><path d="M6,-3.5 h8 M10,-3.5 v8" stroke-width="1.6"/></g>
<path d="M15.5,248 l1.5,-1.5 v1.5z" fill="#bbb" stroke="none"/>
<g transform="translate(0,255.6)"><path d="M7,-4 v8 l5,-3z" fill="#dcdcdc"/></g>
<path d="M15.5,260.6 l1.5,-1.5 v1.5z" fill="#bbb" stroke="none"/>
<g transform="translate(0,269)"><path d="M5,1 c1,-5 7,-6 9,-2 c1,3 -3,5 -6,4z" fill="#bdbdbd"/></g>
<path d="M15.5,274 l1.5,-1.5 v1.5z" fill="#bbb" stroke="none"/>
<g transform="translate(0,282.5)"><path d="M6,3 v-4 h1.5 v-2 h1.5 v1 h1.5 v-1 h1.5 v2 h1 v4 z" fill="#d8d8d8"/></g>
<path d="M15.5,287.5 l1.5,-1.5 v1.5z" fill="#bbb" stroke="none"/>
<g transform="translate(0,295)"><circle cx="9" cy="-1" r="3"/><path d="M11,1.5 l3,3" stroke-width="1.3"/></g>
<path d="M15.5,300 l1.5,-1.5 v1.5z" fill="#bbb" stroke="none"/>
</g>
<rect x="3" y="303" width="3.5" height="3.5" fill="#111" stroke="#bbb" stroke-width="0.6"/><rect x="4.5" y="304.5" width="3" height="3" fill="#ddd"/><path d="M12,306 q2,0 2,-2 M13,303.5 l1,0.5 l1,-0.5" fill="none" stroke="#ccc" stroke-width="0.7"/>
</svg>
<div class="a" style="left:7.5px;top:315.7px;width:8.5px;height:8.6px;background:#fff;border:0.5px solid #999"></div>
<div class="a" style="left:3.5px;top:311.4px;width:8px;height:8px;background:#000;border:0.8px solid #999"></div>
<div class="a" style="left:5px;top:328px;width:9px;height:7px;border:1px solid #bbb"></div>
<div class="a" style="left:7.5px;top:330px;width:4px;height:3px;border-radius:50%;background:#bbb"></div>
<div class="a" style="left:5px;top:342px;width:8px;height:6px;border:1px solid #bbb"></div>
<div class="a" style="left:7px;top:340px;width:8px;height:6px;border:1px solid #bbb;background:#4a4a4a"></div>

<!-- status -->
<div class="t" style="left:26.5px;top:410.5px;font-size:6px;line-height:7.5px;color:#d8d8d8">50%</div>
<div class="a" style="left:47px;top:411.5px;width:5.5px;height:5.5px;border-radius:50%;border:1px solid #aaa"></div><div class="a" style="left:40px;top:410.5px;width:0.8px;height:7px;background:#333"></div>
<div class="t" style="left:74px;top:410.5px;font-size:6px;line-height:7.5px;color:#d8d8d8;letter-spacing:-0.25px">文档:3.63M/4.95M</div>
<div class="t" style="left:140px;top:410.5px;font-size:5px;line-height:7.5px;color:#d8d8d8">▶</div>

<!-- right icon column -->
<div class="a" style="left:563px;top:31px;width:19px;height:5px;background:#363636"></div>
<div class="t" style="left:576.5px;top:30px;font-size:6px;color:#bbb">»</div>
<div class="a" style="left:564.5px;top:37px;width:17px;height:21.5px;border:0.8px solid #5a5a5a;border-radius:1px"></div>
<svg class="a" style="left:563px;top:36px" width="19" height="80">
 <g fill="none" stroke="#c4c4c4" stroke-width="1">
  <circle cx="7" cy="11" r="2"/><path d="M11,9 h2 M12,9 v5 M11,14 h2 M5,17 h9" />
  <path d="M5,31 l3,-3 l2,2 l-3,3z M9,27 l3,-2 l2,2 l-3,2z"/>
  <path d="M5,45 l3,-3 l2,2 M10,41 l2,-4 l2,4z"/>
 </g>
 <path d="M2,22 h15 M2,37 h15" stroke="#3c3c3c" stroke-width="0.8"/>
</svg>

<!-- right panel -->
<div class="a" style="left:583px;top:31px;width:117px;height:5px;background:#363636"></div>
<div class="t" style="left:695.5px;top:30px;font-size:6px;color:#bbb">»</div>
<!-- color panel -->
<div class="a" style="left:583px;top:36px;width:117px;height:9.5px;background:#3c3c3c"></div>
<div class="a" style="left:584px;top:36.5px;width:17px;height:9px;background:#535353"></div>
<div class="t" style="left:586px;top:37px;color:#e2e2e2">颜色</div>
<div class="t" style="left:605px;top:37px;color:#a0a0a0">色板</div>
<div class="t" style="left:690px;top:36.5px;font-size:6px;color:#aaa">▾≡</div>
<div class="a" style="left:583.5px;top:45.5px;width:116.5px;height:54px;background:#535353"></div>
<div class="a" style="left:586px;top:51px;width:10px;height:9px;background:#000;border:0.5px solid #999"></div>
<div class="a" style="left:591px;top:56.5px;width:9px;height:9px;background:#fff"></div>
<div class="a" style="left:586px;top:51px;width:10px;height:9px;background:#000;border:1px solid #888"></div>
<div class="t" style="left:604px;top:51.5px;font-size:6.5px;color:#d8d8d8;font-weight:normal">R</div>
<div class="t" style="left:604px;top:63.5px;font-size:6.5px;color:#d8d8d8;font-weight:normal">G</div>
<div class="t" style="left:604px;top:75.5px;font-size:6.5px;color:#d8d8d8;font-weight:normal">B</div>
<div class="a" style="left:613px;top:52.5px;width:39px;height:2.5px;background:linear-gradient(90deg,#000,#e03030)"></div>
<div class="a" style="left:613px;top:64.5px;width:39px;height:2.5px;background:linear-gradient(90deg,#000,#30c030)"></div>
<div class="a" style="left:613px;top:76.5px;width:39px;height:2.5px;background:linear-gradient(90deg,#000,#3030e0)"></div>
<svg class="a" style="left:610px;top:50px" width="10" height="35"><g fill="#d8d8d8"><path d="M3,8 l2.5,-3 l2.5,3z"/><path d="M3,20 l2.5,-3 l2.5,3z"/><path d="M3,32 l2.5,-3 l2.5,3z"/></g></svg>
<div class="a" style="left:655px;top:51px;width:24px;height:9px;background:#3c3c3c"></div>
<div class="a" style="left:655px;top:63px;width:24px;height:9px;background:#3c3c3c"></div>
<div class="a" style="left:655px;top:75px;width:24px;height:9px;background:#3c3c3c"></div>
<div class="t" style="left:657px;top:52px;color:#e0e0e0">0</div>
<div class="t" style="left:657px;top:64px;color:#e0e0e0">0</div>
<div class="t" style="left:657px;top:76px;color:#e0e0e0">0</div>
<div class="a" style="left:586.5px;top:90px;width:94px;height:7px;background:linear-gradient(90deg,#e8303a,#f0e020 16%,#30b040 31%,#30d0f0 48%,#1020c0 64%,#d020b0 79%,#e82040 93%,#e83040 100%)"></div>
<div class="a" style="left:586.5px;top:90px;width:94px;height:7px;background:linear-gradient(180deg,rgba(255,255,255,.5),rgba(255,255,255,0) 45%,rgba(0,0,0,0) 55%,rgba(0,0,0,.6))"></div>
<div class="a" style="left:680.5px;top:90px;width:4px;height:3.5px;background:#fff"></div>
<div class="a" style="left:680.5px;top:93.5px;width:4px;height:3.5px;background:#000"></div>
<!-- adjustments -->
<div class="a" style="left:583px;top:99.5px;width:117px;height:1.5px;background:#2e2e2e"></div>
<div class="a" style="left:583px;top:101px;width:117px;height:9px;background:#3c3c3c"></div>
<div class="a" style="left:584px;top:101.5px;width:17px;height:8.5px;background:#535353"></div>
<div class="t" style="left:586px;top:102px;color:#e2e2e2">调整</div>
<div class="t" style="left:605px;top:102px;color:#a0a0a0">样式</div>
<div class="t" style="left:690px;top:101.5px;font-size:6px;color:#aaa">▾≡</div>
<div class="a" style="left:583.5px;top:110px;width:116.5px;height:54px;background:#535353"></div>
<div class="a" style="left:695px;top:143px;width:4.5px;height:21px;background:#404040"></div>
<div class="a" style="left:695.5px;top:147px;width:3.5px;height:17px;background:#5e5e5e"></div><div class="a" style="left:695.5px;top:159px;width:3.5px;height:5px;background:#5f7a62"></div>
<div class="t" style="left:590px;top:111.5px;color:#e0e0e0">添加调整</div>
<svg class="a" style="left:0;top:0" width="702" height="170"><g fill="none" stroke="#cfcfcf" stroke-width="0.8"><circle cx="612" cy="128.8" r="1.8"/><path d="M612,124.80000000000001v1.3M612,131.5v1.3M608,128.8h1.3M614.7,128.8h1.3M609.2,126.00000000000001l0.9,0.9M614.8,126.00000000000001l-0.9,0.9M609.2,131.60000000000002l0.9,-0.9M614.8,131.60000000000002l-0.9,-0.9"/><path d="M619.5,131.8 h8 v-2 l-1.5,-2 l-1.5,1 l-1.5,-3 l-1.5,2 l-2,1 z" fill="#bbb"/><rect x="630.5" y="125.80000000000001" width="7" height="6"/><path d="M630.5,131.8 l7,-6"/><rect x="643.5" y="125.80000000000001" width="7" height="6"/><path d="M643.5,130.3 l3,-2.5 l4,0"/><path d="M654.5,125.80000000000001 h7 l-3.5,6z"/><rect x="602.5" y="138.8" width="7" height="6"/><path d="M602.5,141.8 h7"/><path d="M612.5,144.8 h7 M614,138.8 l-1.5,3 h3z M618,138.8 l-1.5,3 h3z"/><rect x="624.5" y="138.8" width="7" height="6"/><path d="M628,138.8 v6"/><circle cx="639" cy="140.8" r="2.3"/><circle cx="641.5" cy="142.8" r="2.3"/><circle cx="651.5" cy="140.60000000000002" r="1.9" fill="#ccc"/><circle cx="649.6" cy="143.20000000000002" r="1.9" fill="#ccc"/><circle cx="653.4" cy="143.20000000000002" r="1.9" fill="#ccc"/><rect x="659.5" y="138.8" width="7" height="6"/><path d="M659.5,141.8 h7 M663,138.8 v6"/><rect x="607.5" y="152.2" width="7" height="6"/><path d="M607.5,158.2 l7,-6"/><rect x="619.0" y="152.2" width="7" height="6"/><path d="M619,157.2 l7,-4"/><rect x="631.3" y="152.2" width="7" height="6"/><path d="M631.3,158.2 l7,-6" stroke-width="1.8"/><rect x="642.8" y="152.2" width="7" height="6"/><path d="M646.3,152.2 v6"/><rect x="654.3" y="152.2" width="7" height="6" fill="#7a7a7a"/></g></svg>
<!-- layers -->
<div class="a" style="left:583px;top:164px;width:117px;height:1.5px;background:#2e2e2e"></div>
<div class="a" style="left:583px;top:165.5px;width:117px;height:8.5px;background:#3c3c3c"></div>
<div class="a" style="left:584px;top:166px;width:17px;height:8px;background:#535353"></div>
<div class="t" style="left:586px;top:166px;color:#e2e2e2">图层</div>
<div class="t" style="left:605px;top:166px;color:#a0a0a0">通道</div>
<div class="t" style="left:624px;top:166px;color:#a0a0a0">路径</div>
<div class="t" style="left:690px;top:165.5px;font-size:6px;color:#aaa">▾≡</div>
<div class="a" style="left:583.5px;top:174px;width:109.5px;height:81px;background:#535353"></div>
<div class="a" style="left:693px;top:174px;width:7px;height:243px;background:#454545;border-left:0.8px solid #383838"></div>
<div class="a" style="left:694px;top:176.5px;width:5px;height:9px;background:#333"></div><div class="a" style="left:694.5px;top:177px;width:4px;height:3px;background:#777"></div>
<div class="box" style="left:587px;top:176px;width:33px;height:8px;background:#5e5e5e;border-color:#6a6a6a"></div>
<div class="t" style="left:589px;top:176.2px;font-size:6px;color:#ddd">⚲ 类型 ⬍</div>
<svg class="a" style="left:628px;top:174px" width="60" height="12"><g fill="none" stroke="#cfcfcf" stroke-width="0.8"><rect x="4" y="3.5" width="5.5" height="5"/><path d="M4.5,8 l2,-2 l3,2" /><circle cx="17" cy="6" r="2.5"/><path d="M17,3.5 a2.5,2.5 0 0 1 0,5z" fill="#cfcfcf"/><path d="M27,3.5h5.5M29.75,3.5v5.5"/><rect x="39" y="3.5" width="5.5" height="5"/><path d="M51,9 v-3 h4 v3z M52,6 v-2 h2 v2" fill="#bbb"/></g></svg>
<div class="box" style="left:587px;top:189px;width:51px;height:8.5px;background:#616161;border-color:#6a6a6a"></div>
<div class="t" style="left:590px;top:189px;color:#e0e0e0">正常</div>
<div class="t" style="left:634px;top:189px;font-size:5px">⬍</div>
<div class="t" style="left:642px;top:189px;color:#e0e0e0">不透明度:</div>
<div class="box" style="left:671px;top:189px;width:19px;height:9px;background:#363636"></div>
<div class="t" style="left:672.5px;top:190px;font-size:5.5px;color:#e6e6e6">100%</div>
<div class="a" style="left:690.5px;top:189px;width:7.5px;height:9px;background:#5c5c5c"></div><div class="a" style="left:692.5px;top:193px;width:3px;height:1px;background:#ccc"></div>
<div class="t" style="left:587px;top:203.5px;color:#e0e0e0">锁定:</div>
<svg class="a" style="left:604px;top:202px" width="45" height="12"><g fill="none" stroke="#d8d8d8" stroke-width="0.8"><rect x="3" y="3" width="5" height="5" stroke-dasharray="1 1"/><path d="M13,9 l6,-6"/><path d="M25,3v6M22,6h6"/><rect x="34" y="5" width="5" height="4" fill="#ccc"/><path d="M35,5v-2h3v2"/></g></svg>
<div class="t" style="left:656px;top:203.5px;color:#e0e0e0">填充:</div>
<div class="box" style="left:671px;top:203px;width:19px;height:9px;background:#363636"></div>
<div class="t" style="left:672.5px;top:204px;font-size:5.5px;color:#e6e6e6">100%</div>
<div class="a" style="left:690.5px;top:203px;width:7.5px;height:9px;background:#5c5c5c"></div><div class="a" style="left:692.5px;top:207px;width:3px;height:1px;background:#ccc"></div>
<div class="a" style="left:583.5px;top:215px;width:109.5px;height:1px;background:#3c3c3c"></div>
<div class="a" style="left:596px;top:216px;width:97px;height:19.5px;background:#5b6a80"></div>
<div class="a" style="left:583.5px;top:235.5px;width:109.5px;height:0.8px;background:#3f3f3f"></div>
<div class="a" style="left:583.5px;top:254.5px;width:109.5px;height:0.8px;background:#3f3f3f"></div>
<svg class="a" style="left:585px;top:220px" width="10" height="30"><g fill="none" stroke="#c8c8c8" stroke-width="0.8"><path d="M2,5 c1.5,-2 4.5,-2 6,0 c-1.5,2 -4.5,2 -6,0z"/><path d="M2,24 c1.5,-2 4.5,-2 6,0 c-1.5,2 -4.5,2 -6,0z"/></g><circle cx="5" cy="5" r="0.9" fill="#c8c8c8"/><circle cx="5" cy="24" r="0.9" fill="#c8c8c8"/></svg>
<div class="a" style="left:600px;top:218px;width:14px;height:15px;border:0.8px solid #ddd;background-color:#fff;background-image:linear-gradient(45deg,#d0d0d0 25%,transparent 25%,transparent 75%,#d0d0d0 75%),linear-gradient(45deg,#d0d0d0 25%,transparent 25%,transparent 75%,#d0d0d0 75%);background-size:3px 3px;background-position:0 0,1.5px 1.5px"></div>
<div class="a" style="left:602px;top:220px;width:10px;height:11px;background:radial-gradient(ellipse at 50% 30%,rgba(240,180,210,.8),rgba(200,220,120,.6) 60%,transparent 80%)"></div>
<div class="t" style="left:618px;top:222px;color:#e6e6e6">图层 2</div>
<div class="a" style="left:600px;top:237.5px;width:14px;height:15px;background-color:#fff;background-image:linear-gradient(45deg,#d0d0d0 25%,transparent 25%,transparent 75%,#d0d0d0 75%),linear-gradient(45deg,#d0d0d0 25%,transparent 25%,transparent 75%,#d0d0d0 75%);background-size:3px 3px;background-position:0 0,1.5px 1.5px"></div>
<div class="t" style="left:618px;top:241.5px;color:#e0e0e0">图层 1</div>

<!-- logo overlay -->
<div class="a" style="left:451px;top:346px;width:249.5px;height:71px;background:#fff;border-top-left-radius:24px"></div>
<svg class="a" style="left:470px;top:340px" width="232" height="79" viewBox="470 340 232 79">
 <rect x="483.7" y="351" width="47.3" height="62.4" rx="3" fill="#3a9be0"/>
 <circle cx="507.8" cy="379.5" r="14" fill="none" stroke="#fff" stroke-width="5"/>
 <path d="M497,389 L483.7,399" stroke="#fff" stroke-width="5"/>
 <path d="M533,353 h4.3 v58.5 h-4.3" fill="none" stroke="#3a9be0" stroke-width="1.4"/>
 <text x="551.5" y="362.5" font-family="Liberation Sans" font-size="13" fill="#8a8a8a" stroke="#8a8a8a" stroke-width="0.35" textLength="57" lengthAdjust="spacingAndGlyphs">PConline</text>
 <g fill="none" stroke="#555" stroke-width="3.3">
  <path d="M553.7,370 V410"/>
  <path d="M559.5,371.2 H583 M571.3,371.2 V410"/>
  <path d="M587,371.2 H627 M607.4,372 V381"/>
  <path d="M627,381.7 H593 q-4,0 -4,4 V403.5 q0,4 4,4 H621 q4,0 4,-4 V381.7"/>
  <path d="M594.5,395.3 H625"/>
  <path d="M636,373 C642,373 646,372 649,369.5 M647.8,372 V410 M627.5,381.5 H649.5 M640.8,381.5 V410 M630.5,385 V405 q0,4 -3,5"/>
  <path d="M652.5,372 L658,377 M652.5,382 L658,387.5 M663.3,370 V410 M651,399.5 H668"/>
 </g>
</svg>
<div class="a" style="left:0;top:417.5px;width:702px;height:1.5px;background:#1f1f1f"></div>
<div class="a" style="left:700px;top:0;width:2px;height:419px;background:#1f1f1f"></div>
</div></body></html>
